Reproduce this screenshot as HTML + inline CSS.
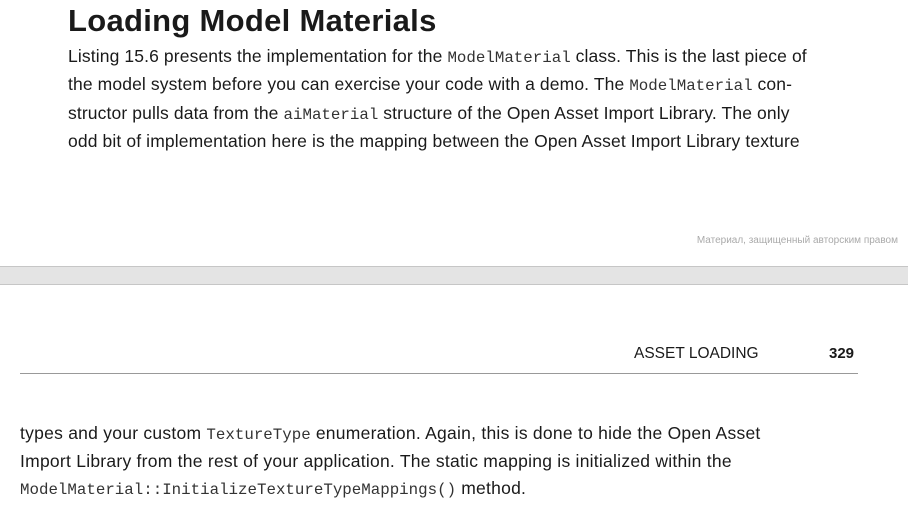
<!DOCTYPE html>
<html><head><meta charset="utf-8"><style>
body{margin:0;width:908px;height:512px;background:#fff;position:relative;overflow:hidden;font-family:"Liberation Sans",sans-serif;color:#1a1a1a}
.h{position:absolute;left:68px;top:3px;font-size:31px;font-weight:bold;letter-spacing:0.3px}
.p{position:absolute;font-size:17.5px;line-height:28.3px;white-space:nowrap;letter-spacing:0.12px}
code{font-family:"Liberation Mono",monospace;font-size:15.8px;color:#333;line-height:0;letter-spacing:0}
</style></head><body>
<div class="h">Loading Model Materials</div>
<div class="p" style="left:68px;top:42px">Listing 15.6 presents the implementation for the <code>ModelMaterial</code> class. This is the last piece of<br>the model system before you can exercise your code with a demo. The <code>ModelMaterial</code> con-<br>structor pulls data from the <code>aiMaterial</code> structure of the Open Asset Import Library. The only<br>odd bit of implementation here is the mapping between the Open Asset Import Library texture</div>
<div style="position:absolute;right:10px;top:235px;font-size:10px;color:#aaa">Материал, защищенный авторским правом</div>
<div style="position:absolute;left:0;top:266px;width:908px;height:17px;background:#e4e4e4;border-top:1.5px solid #c6c6c6;border-bottom:1.5px solid #c6c6c6"></div>
<div style="position:absolute;left:634px;top:345px;font-size:15.5px">ASSET LOADING</div>
<div style="position:absolute;left:829px;top:345px;font-size:15px;font-weight:bold">329</div>
<div style="position:absolute;left:20px;top:373px;width:838px;height:1px;background:#999"></div>
<div class="p" style="left:20px;top:420px;line-height:27.5px;letter-spacing:0.25px">types and your custom <code>TextureType</code> enumeration. Again, this is done to hide the Open Asset<br>Import Library from the rest of your application. The static mapping is initialized within the<br><code>ModelMaterial::InitializeTextureTypeMappings()</code> method.</div>
</body></html>
